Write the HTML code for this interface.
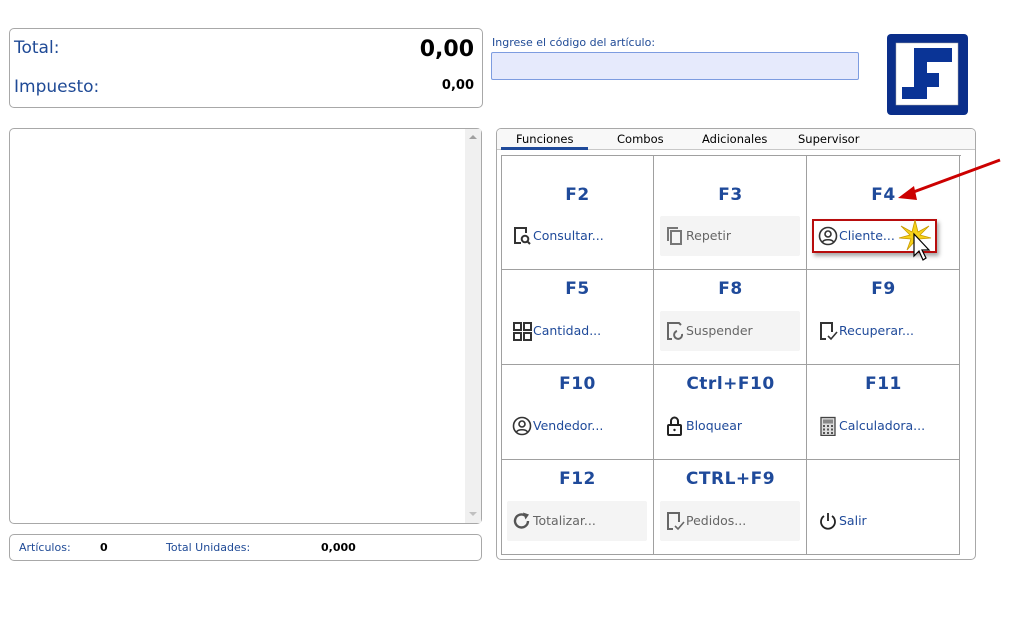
<!DOCTYPE html>
<html><head><meta charset="utf-8"><style>
*{margin:0;padding:0;box-sizing:border-box}
body{width:1023px;height:625px;background:#fff;font-family:"DejaVu Sans","Liberation Sans",sans-serif;position:relative;overflow:hidden}
.a{position:absolute}
.box{position:absolute;border:1px solid #a8a8a8;border-radius:5px;background:#fff}
.blue{color:#1f4a96}
.cell{position:absolute;width:153px;border-right:1px solid #a0a0a0;border-bottom:1px solid #a0a0a0}
.h{position:absolute;left:0;width:153px;text-align:center;font-weight:bold;font-size:17px;color:#1f4a9a;letter-spacing:0.5px}
.btn{position:absolute;left:6px;width:140px;height:40px;border-radius:2px}
.g{background:#f4f4f4}
.btn svg{position:absolute;left:5px;top:10px}
.btn span{position:absolute;left:26px;top:12px;font-size:12.5px;color:#1f4a9a;white-space:nowrap}
.g span{color:#666}
</style></head><body>

<div class="box" style="left:9px;top:28px;width:474px;height:80px"></div>
<div class="a blue" style="left:14px;top:38px;font-size:17px">Total:</div>
<div class="a" style="right:549px;top:37px;font-size:22px;font-weight:bold">0,00</div>
<div class="a blue" style="left:14px;top:77px;font-size:17px">Impuesto:</div>
<div class="a" style="right:549px;top:78px;font-size:13px;font-weight:bold">0,00</div>

<div class="a blue" style="left:492px;top:36px;font-size:11px">Ingrese el código del artículo:</div>
<div class="a" style="left:491px;top:52px;width:368px;height:28px;background:#e6eafc;border:1px solid #7d9ce0;border-radius:2px"></div>

<svg class="a" style="left:887px;top:34px" width="81" height="81" viewBox="0 0 81 81">
<rect x="0" y="0" width="81" height="81" rx="4" fill="#0a2e8a"/>
<rect x="9" y="9" width="62" height="62" fill="#fff" stroke="#aaa" stroke-width="0.5"/>
<path d="M27 14H65V28H40V39H52V53H40V65H15V53H27Z" fill="#0a3496"/>
</svg>

<div class="box" style="left:9px;top:128px;width:473px;height:396px"></div>
<div class="a" style="left:465px;top:129px;width:16px;height:394px;background:#f0f0f0"></div>
<div class="a" style="left:469px;top:135px;width:0;height:0;border-left:4px solid transparent;border-right:4px solid transparent;border-bottom:4px solid #a0a0a0"></div>
<div class="a" style="left:469px;top:512px;width:0;height:0;border-left:4px solid transparent;border-right:4px solid transparent;border-top:4px solid #c0c0c0"></div>

<div class="box" style="left:9px;top:534px;width:473px;height:27px"></div>
<div class="a blue" style="left:19px;top:541px;font-size:11px">Artículos:</div>
<div class="a" style="left:100px;top:541px;font-size:11px;font-weight:bold">0</div>
<div class="a blue" style="left:166px;top:541px;font-size:11px">Total Unidades:</div>
<div class="a" style="left:321px;top:541px;font-size:11px;font-weight:bold">0,000</div>

<div class="box" style="left:496px;top:128px;width:480px;height:432px"></div>
<div class="a" style="left:497px;top:129px;width:478px;height:21px;background:#f8f8f8;border-bottom:1px solid #c8c8c8;border-radius:4px 4px 0 0"></div>
<div class="a" style="left:516px;top:132px;font-size:11.5px">Funciones</div>
<div class="a" style="left:617px;top:132px;font-size:11.5px">Combos</div>
<div class="a" style="left:702px;top:132px;font-size:11.5px">Adicionales</div>
<div class="a" style="left:798px;top:132px;font-size:11.5px">Supervisor</div>
<div class="a" style="left:501px;top:147px;width:87px;height:3px;background:#1f4a9a"></div>

<div class="a" style="left:501px;top:155px;width:460px;height:400px;border-left:1px solid #a0a0a0;border-top:1px solid #a0a0a0"></div>

<!-- Row 1 -->
<div class="cell" style="left:501px;top:155px;height:115px">
 <div class="h" style="top:30px">F2</div>
 <div class="btn" style="top:61px"><svg width="20" height="20" viewBox="0 0 20 20"><path d="M9 17H3V2H14V7" fill="none" stroke="#333" stroke-width="2"/><circle cx="13" cy="13" r="3.3" fill="none" stroke="#333" stroke-width="2"/><path d="M15.5 15.5L18 18" stroke="#333" stroke-width="2"/></svg><span>Consultar...</span></div>
</div>
<div class="cell" style="left:654px;top:155px;height:115px">
 <div class="h" style="top:30px">F3</div>
 <div class="btn g" style="top:61px"><svg width="20" height="20" viewBox="0 0 20 20"><path d="M3 15V2H13" fill="none" stroke="#777" stroke-width="2"/><rect x="6" y="5" width="10" height="13" fill="none" stroke="#777" stroke-width="2"/></svg><span>Repetir</span></div>
</div>
<div class="cell" style="left:807px;top:155px;height:115px">
 <div class="h" style="top:30px">F4</div>
 <div class="btn" style="top:61px"><svg width="20" height="20" viewBox="0 0 20 20"><circle cx="10" cy="10" r="8.5" fill="none" stroke="#333" stroke-width="1.6"/><circle cx="10" cy="8" r="3" fill="none" stroke="#333" stroke-width="1.6"/><path d="M4.5 16C6 13 14 13 15.5 16" fill="none" stroke="#333" stroke-width="1.6"/></svg><span>Cliente...</span></div>
</div>

<!-- Row 2 -->
<div class="cell" style="left:501px;top:270px;height:95px">
 <div class="h" style="top:9px">F5</div>
 <div class="btn" style="top:41px"><svg width="20" height="20" viewBox="0 0 20 20"><g fill="none" stroke="#333" stroke-width="2"><rect x="2" y="2" width="7" height="7"/><rect x="12" y="2" width="7" height="7"/><rect x="2" y="12" width="7" height="7"/><rect x="12" y="12" width="7" height="7"/></g></svg><span>Cantidad...</span></div>
</div>
<div class="cell" style="left:654px;top:270px;height:95px">
 <div class="h" style="top:9px">F8</div>
 <div class="btn g" style="top:41px"><svg width="20" height="20" viewBox="0 0 20 20"><path d="M7 18H3V2H14L16 4" fill="none" stroke="#666" stroke-width="2"/><path d="M12 10A4 4 0 1 0 17 13" fill="none" stroke="#666" stroke-width="2"/></svg><span>Suspender</span></div>
</div>
<div class="cell" style="left:807px;top:270px;height:95px">
 <div class="h" style="top:9px">F9</div>
 <div class="btn" style="top:41px"><svg width="20" height="20" viewBox="0 0 20 20"><path d="M8 18H3V2H14V11" fill="none" stroke="#333" stroke-width="2"/><path d="M10 15L13 18L19 11" fill="none" stroke="#333" stroke-width="1.6"/></svg><span>Recuperar...</span></div>
</div>

<!-- Row 3 -->
<div class="cell" style="left:501px;top:365px;height:95px">
 <div class="h" style="top:9px">F10</div>
 <div class="btn" style="top:41px"><svg width="20" height="20" viewBox="0 0 20 20"><circle cx="10" cy="10" r="8.5" fill="none" stroke="#333" stroke-width="1.6"/><circle cx="10" cy="8" r="3" fill="none" stroke="#333" stroke-width="1.6"/><path d="M4.5 16C6 13 14 13 15.5 16" fill="none" stroke="#333" stroke-width="1.6"/></svg><span>Vendedor...</span></div>
</div>
<div class="cell" style="left:654px;top:365px;height:95px">
 <div class="h" style="top:9px">Ctrl+F10</div>
 <div class="btn" style="top:41px"><svg width="20" height="20" viewBox="0 0 20 20"><rect x="3" y="9" width="13" height="10" rx="1" fill="none" stroke="#222" stroke-width="2"/><path d="M6 9V5A3.5 3.5 0 0 1 13 5V9" fill="none" stroke="#222" stroke-width="2"/><circle cx="9.5" cy="14" r="1.2" fill="#222"/></svg><span>Bloquear</span></div>
</div>
<div class="cell" style="left:807px;top:365px;height:95px">
 <div class="h" style="top:9px">F11</div>
 <div class="btn" style="top:41px"><svg width="20" height="20" viewBox="0 0 20 20"><rect x="3" y="1.5" width="14" height="18" fill="#ddd" stroke="#444" stroke-width="1.3"/><rect x="5" y="3.5" width="10" height="4" fill="#888"/><g fill="#555"><rect x="5" y="9" width="2" height="2"/><rect x="9" y="9" width="2" height="2"/><rect x="13" y="9" width="2" height="2"/><rect x="5" y="12.5" width="2" height="2"/><rect x="9" y="12.5" width="2" height="2"/><rect x="13" y="12.5" width="2" height="2"/><rect x="5" y="16" width="2" height="2"/><rect x="9" y="16" width="2" height="2"/><rect x="13" y="16" width="2" height="2"/></g></svg><span>Calculadora...</span></div>
</div>

<!-- Row 4 -->
<div class="cell" style="left:501px;top:460px;height:95px">
 <div class="h" style="top:9px">F12</div>
 <div class="btn g" style="top:41px"><svg width="20" height="20" viewBox="0 0 20 20"><path d="M16 10A6.5 6.5 0 1 1 13 4.5" fill="none" stroke="#555" stroke-width="2.4"/><path d="M11 1.5L17 3.5L13.5 8.5Z" fill="#555"/></svg><span>Totalizar...</span></div>
</div>
<div class="cell" style="left:654px;top:460px;height:95px">
 <div class="h" style="top:9px">CTRL+F9</div>
 <div class="btn g" style="top:41px"><svg width="20" height="20" viewBox="0 0 20 20"><path d="M8 18H3V2H14V11" fill="none" stroke="#666" stroke-width="2"/><path d="M10 15L13 18L19 11" fill="none" stroke="#666" stroke-width="1.6"/></svg><span>Pedidos...</span></div>
</div>
<div class="cell" style="left:807px;top:460px;height:95px">
 <div class="btn" style="top:41px"><svg width="20" height="20" viewBox="0 0 20 20"><path d="M6 5A7 7 0 1 0 14 5" fill="none" stroke="#222" stroke-width="1.8"/><path d="M10 2V10" stroke="#222" stroke-width="1.8"/></svg><span>Salir</span></div>
</div>

<!-- highlight -->
<div class="a" style="left:812px;top:219px;width:125px;height:34px;border:2px solid #b80d0d;box-shadow:2px 3px 4px rgba(0,0,0,0.35)"></div>
<svg class="a" style="left:890px;top:150px" width="120" height="120" viewBox="0 0 120 120">
<path d="M110 10L18 44" stroke="#c00" stroke-width="3" fill="none"/>
<path d="M8 48L24 36L27 50Z" fill="#c00"/>
<g transform="translate(25,86)"><path d="M0-16L3-4L14-10L5-1L16 2L4 3L8 14L0 5L-8 14L-4 3L-16 2L-5-1L-14-10L-3-4Z" fill="#f7d21a" stroke="#c89a00" stroke-width="0.8"/></g>
<path d="M24 84L24 106L29 101L33 110L36 108L32 100L39 100Z" fill="#fff" stroke="#000" stroke-width="1.2"/>
</svg>
</body></html>
